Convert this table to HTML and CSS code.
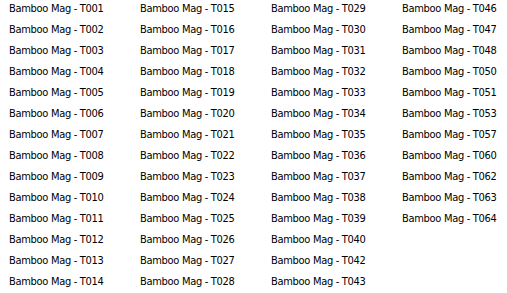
FILE: index.html
```html
<!DOCTYPE html>
<html>
<head>
<meta charset="utf-8">
<link rel="stylesheet" href="styles.css">
</head>
<body>
<ul class="list">
<li>Bamboo Mag - T001</li>
<li>Bamboo Mag - T002</li>
<li>Bamboo Mag - T003</li>
<li>Bamboo Mag - T004</li>
<li>Bamboo Mag - T005</li>
<li>Bamboo Mag - T006</li>
<li>Bamboo Mag - T007</li>
<li>Bamboo Mag - T008</li>
<li>Bamboo Mag - T009</li>
<li>Bamboo Mag - T010</li>
<li>Bamboo Mag - T011</li>
<li>Bamboo Mag - T012</li>
<li>Bamboo Mag - T013</li>
<li>Bamboo Mag - T014</li>
<li>Bamboo Mag - T015</li>
<li>Bamboo Mag - T016</li>
<li>Bamboo Mag - T017</li>
<li>Bamboo Mag - T018</li>
<li>Bamboo Mag - T019</li>
<li>Bamboo Mag - T020</li>
<li>Bamboo Mag - T021</li>
<li>Bamboo Mag - T022</li>
<li>Bamboo Mag - T023</li>
<li>Bamboo Mag - T024</li>
<li>Bamboo Mag - T025</li>
<li>Bamboo Mag - T026</li>
<li>Bamboo Mag - T027</li>
<li>Bamboo Mag - T028</li>
<li>Bamboo Mag - T029</li>
<li>Bamboo Mag - T030</li>
<li>Bamboo Mag - T031</li>
<li>Bamboo Mag - T032</li>
<li>Bamboo Mag - T033</li>
<li>Bamboo Mag - T034</li>
<li>Bamboo Mag - T035</li>
<li>Bamboo Mag - T036</li>
<li>Bamboo Mag - T037</li>
<li>Bamboo Mag - T038</li>
<li>Bamboo Mag - T039</li>
<li>Bamboo Mag - T040</li>
<li>Bamboo Mag - T042</li>
<li>Bamboo Mag - T043</li>
<li>Bamboo Mag - T046</li>
<li>Bamboo Mag - T047</li>
<li>Bamboo Mag - T048</li>
<li>Bamboo Mag - T050</li>
<li>Bamboo Mag - T051</li>
<li>Bamboo Mag - T053</li>
<li>Bamboo Mag - T057</li>
<li>Bamboo Mag - T060</li>
<li>Bamboo Mag - T062</li>
<li>Bamboo Mag - T063</li>
<li>Bamboo Mag - T064</li>
</ul>
</body>
</html>
```
FILE: styles.css
```css
html, body {
  margin: 0;
  padding: 0;
  background: #ffffff;
  overflow: hidden;
}
.list {
  list-style: none;
  margin: 0;
  padding: 0 0 0 9px;
  display: grid;
  grid-auto-flow: column;
  grid-template-rows: repeat(14, 21px);
  grid-template-columns: repeat(3, 131px) 1fr;
  font-family: "DejaVu Sans Condensed", "DejaVu Sans", sans-serif;
  font-stretch: condensed;
  font-size: 11px;
  letter-spacing: -0.3px;
  color: #000000;
}
.list li {
  line-height: 17px;
  padding-bottom: 4px;
  white-space: nowrap;
}
```
